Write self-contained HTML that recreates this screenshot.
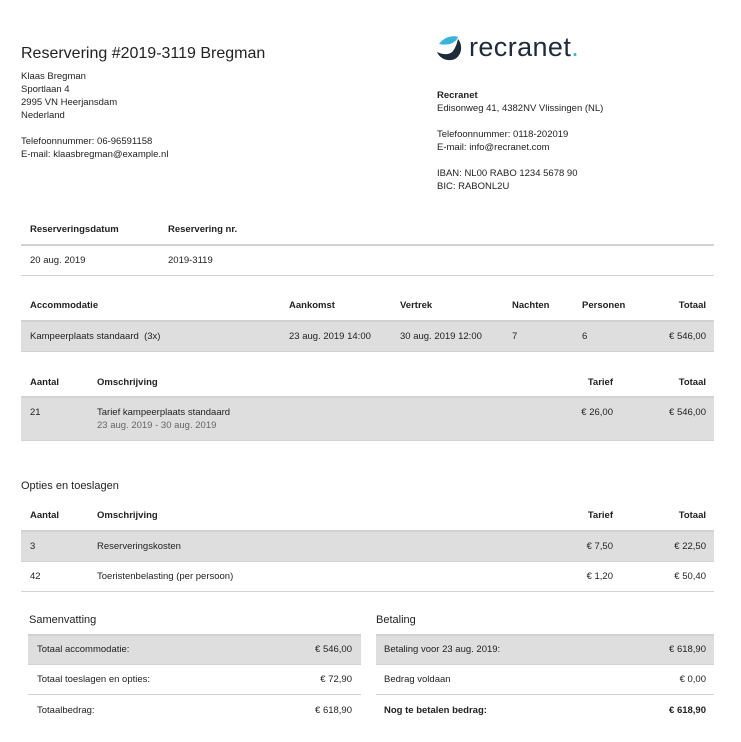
<!DOCTYPE html>
<html><head><meta charset="utf-8"><style>
body{margin:0;width:741px;height:740px;background:#fff;font-family:"Liberation Sans",Arial,sans-serif;color:#222;position:relative;overflow:hidden}
#w{position:absolute;left:0;top:2px;width:741px;height:740px}
.t{position:absolute;font-size:9.5px;line-height:14px;white-space:nowrap}
.b{font-weight:bold}
.r{text-align:right}
.g{position:absolute;background:#dedede}
.l{position:absolute;height:2px;background:#d2d2d2}
</style></head><body><div id="w">
<div class="t" style="left:21px;top:42px;font-size:16px;line-height:20px">Reservering #2019-3119 Bregman</div>
<div class="t" style="left:21px;top:68px;line-height:13px">Klaas Bregman<br>Sportlaan 4<br>2995 VN Heerjansdam<br>Nederland<br><br>Telefoonnummer: 06-96591158<br>E-mail: klaasbregman@example.nl</div>

<svg style="position:absolute;left:436px;top:31px" width="30" height="30" viewBox="0 0 30 30">
<path d="M3 11 C8 4 16 2 22 4 C20 10 12 13 3 11Z" fill="#3bb3d8"/>
<path d="M22 6 C27 12 26 22 19 26 C12 29 4 26 1 19 C7 22 14 22 17 18 C20 14 21 10 22 6Z" fill="#1d2b3a"/>
</svg>
<div class="t" style="left:469px;top:28px;font-size:27px;line-height:34px;color:#1d2b3a;letter-spacing:0.4px">recranet<span style="color:#3bb3d8">.</span></div>

<div class="t" style="left:437px;top:87px;line-height:13px"><b>Recranet</b><br>Edisonweg 41, 4382NV Vlissingen (NL)<br><br>Telefoonnummer: 0118-202019<br>E-mail: info@recranet.com<br><br>IBAN: NL00 RABO 1234 5678 90<br>BIC: RABONL2U</div>

<div class="t b" style="left:30px;top:221px">Reserveringsdatum</div>
<div class="t b" style="left:168px;top:221px">Reservering nr.</div>
<div class="l" style="left:21px;width:693px;top:242px"></div>
<div class="t" style="left:30px;top:252px">20 aug. 2019</div>
<div class="t" style="left:168px;top:252px">2019-3119</div>
<div class="l" style="left:21px;width:693px;top:273px;height:1px"></div>

<div class="t b" style="left:30px;top:297px">Accommodatie</div>
<div class="t b" style="left:289px;top:297px">Aankomst</div>
<div class="t b" style="left:400px;top:297px">Vertrek</div>
<div class="t b" style="left:512px;top:297px">Nachten</div>
<div class="t b" style="left:582px;top:297px">Personen</div>
<div class="t b r" style="right:35px;top:297px">Totaal</div>
<div class="g" style="left:21px;width:693px;top:318px;height:32px"></div>
<div class="l" style="left:21px;width:693px;top:318px"></div>
<div class="t" style="left:30px;top:328px">Kampeerplaats standaard&nbsp; (3x)</div>
<div class="t" style="left:289px;top:328px">23 aug. 2019 14:00</div>
<div class="t" style="left:400px;top:328px">30 aug. 2019 12:00</div>
<div class="t" style="left:512px;top:328px">7</div>
<div class="t" style="left:582px;top:328px">6</div>
<div class="t r" style="right:35px;top:328px">€ 546,00</div>
<div class="l" style="left:21px;width:693px;top:349px;height:1px"></div>

<div class="t b" style="left:30px;top:374px">Aantal</div>
<div class="t b" style="left:97px;top:374px">Omschrijving</div>
<div class="t b r" style="right:128px;top:374px">Tarief</div>
<div class="t b r" style="right:35px;top:374px">Totaal</div>
<div class="g" style="left:21px;width:693px;top:394px;height:45px"></div>
<div class="l" style="left:21px;width:693px;top:394px"></div>
<div class="t" style="left:30px;top:404px">21</div>
<div class="t" style="left:97px;top:404px">Tarief kampeerplaats standaard</div>
<div class="t" style="left:97px;top:417px;color:#666">23 aug. 2019 - 30 aug. 2019</div>
<div class="t r" style="right:128px;top:404px">€ 26,00</div>
<div class="t r" style="right:35px;top:404px">€ 546,00</div>
<div class="l" style="left:21px;width:693px;top:438px;height:1px"></div>

<div class="t" style="left:21px;top:476px;font-size:11px;line-height:16px">Opties en toeslagen</div>

<div class="t b" style="left:30px;top:507px">Aantal</div>
<div class="t b" style="left:97px;top:507px">Omschrijving</div>
<div class="t b r" style="right:128px;top:507px">Tarief</div>
<div class="t b r" style="right:35px;top:507px">Totaal</div>
<div class="g" style="left:21px;width:693px;top:528px;height:32px"></div>
<div class="l" style="left:21px;width:693px;top:528px"></div>
<div class="t" style="left:30px;top:538px">3</div>
<div class="t" style="left:97px;top:538px">Reserveringskosten</div>
<div class="t r" style="right:128px;top:538px">€ 7,50</div>
<div class="t r" style="right:35px;top:538px">€ 22,50</div>
<div class="l" style="left:21px;width:693px;top:559px;height:1px"></div>
<div class="t" style="left:30px;top:568px">42</div>
<div class="t" style="left:97px;top:568px">Toeristenbelasting (per persoon)</div>
<div class="t r" style="right:128px;top:568px">€ 1,20</div>
<div class="t r" style="right:35px;top:568px">€ 50,40</div>
<div class="l" style="left:21px;width:693px;top:589px;height:1px"></div>

<div class="t" style="left:29px;top:610px;font-size:11px;line-height:16px">Samenvatting</div>
<div class="g" style="left:28px;width:333px;top:632px;height:31px"></div>
<div class="l" style="left:28px;width:333px;top:632px"></div>
<div class="t" style="left:37px;top:641px">Totaal accommodatie:</div>
<div class="t r" style="right:389px;top:641px">€ 546,00</div>
<div class="l" style="left:28px;width:333px;top:662px;height:1px"></div>
<div class="t" style="left:37px;top:671px">Totaal toeslagen en opties:</div>
<div class="t r" style="right:389px;top:671px">€ 72,90</div>
<div class="l" style="left:28px;width:333px;top:692px;height:1px"></div>
<div class="t" style="left:37px;top:702px">Totaalbedrag:</div>
<div class="t r" style="right:389px;top:702px">€ 618,90</div>

<div class="t" style="left:376px;top:610px;font-size:11px;line-height:16px">Betaling</div>
<div class="g" style="left:376px;width:338px;top:632px;height:31px"></div>
<div class="l" style="left:376px;width:338px;top:632px"></div>
<div class="t" style="left:384px;top:641px">Betaling voor 23 aug. 2019:</div>
<div class="t r" style="right:35px;top:641px">€ 618,90</div>
<div class="l" style="left:376px;width:338px;top:662px;height:1px"></div>
<div class="t" style="left:384px;top:671px">Bedrag voldaan</div>
<div class="t r" style="right:35px;top:671px">€ 0,00</div>
<div class="l" style="left:376px;width:338px;top:692px;height:1px"></div>
<div class="t b" style="left:384px;top:702px">Nog te betalen bedrag:</div>
<div class="t b r" style="right:35px;top:702px">€ 618,90</div>
</div></body></html>
